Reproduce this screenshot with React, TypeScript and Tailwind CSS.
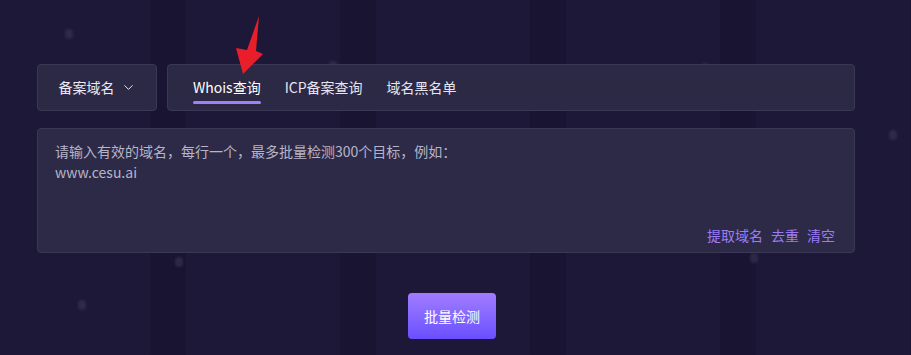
import { ChevronDown } from "lucide-react";

const dots = [
  { x: 69, y: 34 },
  { x: 333, y: 66 },
  { x: 568, y: 74 },
  { x: 705, y: 68 },
  { x: 893, y: 135 },
  { x: 179, y: 262 },
  { x: 754, y: 258 },
  { x: 82, y: 305 },
];

export default function App() {
  return (
    <div
      className="relative w-full h-[355px] overflow-hidden bg-[#1d1838] bg-[repeating-linear-gradient(90deg,transparent_0px,transparent_150px,rgba(8,5,25,0.2)_150px,rgba(8,5,25,0.2)_186px,transparent_186px,transparent_190px)] text-[14px]"
      style={{ fontFamily: '"Noto Sans CJK SC", "Noto Sans", sans-serif' }}
    >
      {/* background dots */}
      {dots.map((d, i) => (
        <div
          key={i}
          className="absolute w-[8px] h-[10px] rounded-full bg-[#3a3655] opacity-60 blur-[1px]"
          style={{ left: d.x - 4, top: d.y - 5 }}
        />
      ))}

      <div className="relative ml-[37px] w-[818px] pt-[64px]">
        <div className="flex gap-[10px]">
          <button
            type="button"
            className="w-[120px] h-[47px] flex items-center justify-center gap-[6px] rounded-[4px] border border-[#3b3856] bg-[#2c2945] text-[#ecebf5]"
          >
            <span>备案域名</span>
            <ChevronDown className="w-[15px] h-[15px] text-[#e6e5f2]" strokeWidth={1.6} />
          </button>
          <div className="flex-1 h-[47px] flex items-stretch gap-[24px] px-[25px] rounded-[4px] border border-[#3b3856] bg-[#2c2945]">
            <div className="relative flex items-center text-white">
              Whois查询
              <span className="absolute left-0 right-0 bottom-[6px] h-[3px] rounded-full bg-[#a17ff6]" />
            </div>
            <div className="flex items-center text-[#e6e5f2]">ICP备案查询</div>
            <div className="flex items-center text-[#e6e5f2]">域名黑名单</div>
          </div>
        </div>

        <div className="mt-[17px] h-[125px] flex flex-col rounded-[4px] border border-[#3b3856] bg-[#2d2a47] px-[17px] pt-[12px] pb-[6px]">
          <div className="flex-1 leading-[21px] text-[#b6b4c8]">
            <div>请输入有效的域名，每行一个，最多批量检测300个目标，例如：</div>
            <div>www.cesu.ai</div>
          </div>
          <div className="flex justify-end gap-[8px] pr-[2px] text-[#9b7cf7]">
            <span>提取域名</span>
            <span>去重</span>
            <span>清空</span>
          </div>
        </div>

        <button
          type="button"
          className="mt-[40px] ml-[371px] w-[88px] h-[46px] rounded-[4px] bg-gradient-to-b from-[#a27cff] to-[#6a4eff] text-white"
        >
          批量检测
        </button>
      </div>

      {/* red annotation arrow */}
      <svg className="absolute left-0 top-0 pointer-events-none" width="300" height="100">
        <polygon
          points="259,16 256,51 263,54 243,74 236,48 247,50"
          fill="#ea1d2a"
        />
      </svg>
    </div>
  );
}
